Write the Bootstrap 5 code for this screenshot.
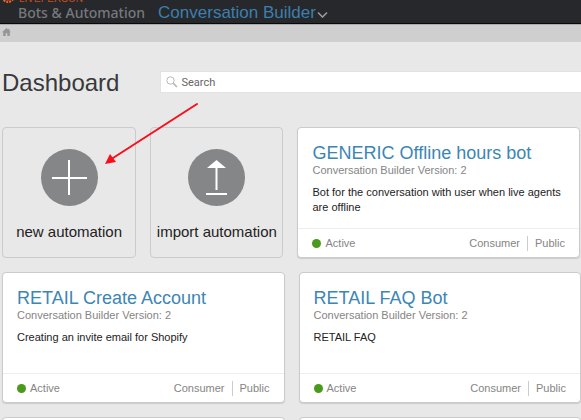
<!DOCTYPE html>
<html lang="en">
<head>
<meta charset="utf-8">
<meta name="viewport" content="width=device-width, initial-scale=1">
<title>Conversation Builder - Dashboard</title>
<link href="https://cdn.jsdelivr.net/npm/bootstrap@5.3.0/dist/css/bootstrap.min.css" rel="stylesheet">
<style>
body{font-family:"Liberation Sans",Arial,sans-serif;background:#e8e8e8;color:#222;overflow-x:hidden;font-size:11px;line-height:15px}
a{text-decoration:none}
.topbar{background:#26282c;border-bottom:1px solid #08080a;height:24px;overflow:hidden}
.logo-line{height:3px;padding-left:1px;gap:4px}
.logo-line svg{flex:none}
.logo-word{color:#c2501f;font-size:10px;line-height:8px}
.product{height:20px;gap:13px;padding-left:18px}
.suite{font:500 14px/20px "Noto Sans","Open Sans",sans-serif;color:#77797b}
.app-menu{color:#3d7fad;font-size:17px;line-height:20px;gap:1px}
.crumbs{background:#cfcfcf;border-top:1px solid #aaa;height:18px;padding-left:2px}
.crumbs a{margin-bottom:3px}
.heading-row{padding:29px 0 32px 2px;gap:41px}
.heading-row h1{font-size:24px;line-height:24px;color:#37393b}
.search-box{background:#fff;height:22px;margin-bottom:2px;padding-left:5px;gap:3px;border:1px solid #e2e2e2;border-right:0}
.search-box input{font:11px/15px Roboto,sans-serif;color:#555}
.search-box input::placeholder{color:#666;opacity:1}
.board{display:grid;gap:14px;padding-left:2px}
.board-top{grid-template-columns:134fr 133fr 282fr;margin-bottom:14px;padding-right:1px}
.board-bots{grid-template-columns:1fr 1fr}
.tile,.bot{min-height:131px;border:1px solid #cbcbcb;border-radius:4px}
.tile{background:none;color:#222;font-size:15px;line-height:20px;padding:21px 0 14px;gap:16px;white-space:nowrap}
.bot{background:#fff;box-shadow:0 1px 1px #ccc}
.bot-main{padding:15px 14px 0}
.bot h2{font-size:18px;line-height:20px;color:#3c86b4}
.muted{color:#858585}
.bot-text{margin-top:7px}
.bot-foot{border-top:1px solid #eee;height:29px;padding:0 14px;color:#858585}
.dot{width:9px;height:9px;background:#4a9a1c}
.audience{border-right:1px solid #ccc;padding-right:7px;margin-right:7px}
.pointer{left:100px;top:58px;pointer-events:none}
</style>
</head>
<body>
<header class="topbar">
  <div class="logo-line d-flex align-items-end">
    <svg width="14" height="14" viewBox="0 0 14 14"><circle cx="7" cy="7" r="5" fill="#e8622c"/><circle cx="7" cy="7" r="6" fill="none" stroke="#e8622c" stroke-width="2" stroke-dasharray="2 1"/><path d="M5 11H9" stroke="#26282c"/></svg>
    <span class="logo-word">LIVEPERSON</span>
  </div>
  <div class="product d-flex align-items-center">
    <span class="suite">Bots &amp; Automation</span>
    <button class="app-menu btn p-0 border-0 d-flex align-items-center" type="button">Conversation Builder
      <svg width="11" height="10" viewBox="0 0 11 10" fill="none" stroke="#9b9b9b" stroke-width="1.6"><path d="M1 4.500 5.500 9 10 4.500"/></svg>
    </button>
  </div>
</header>
<nav class="crumbs d-flex align-items-center" aria-label="Breadcrumb">
  <a href="#" class="d-flex" aria-label="Home"><svg width="9" height="8" viewBox="0 0 9 8" fill="#969696"><path d="M4.5 0 0 4.2H1.2V8H3.7V5.2H5.3V8H7.8V4.2H9L7.5 2.8V.7H6.3V1.7Z"/></svg></a>
</nav>
<main class="position-relative">
  <div class="heading-row d-flex align-items-center">
    <h1 class="fw-normal m-0">Dashboard</h1>
    <label class="search-box d-flex align-items-center flex-grow-1">
      <svg width="12" height="12" viewBox="0 0 12 12" fill="none" stroke="#b9b9b9"><circle cx="4.5" cy="4.5" r="3.7"/><path d="M7.3 7.3 11 11" stroke-width="1.7"/></svg>
      <input class="border-0 p-0 bg-transparent flex-grow-1" type="search" placeholder="Search" aria-label="Search">
    </label>
  </div>
  <section class="board board-top">
    <button class="tile d-flex flex-column align-items-center" type="button">
      <svg width="57" height="57" viewBox="0 0 57 57"><circle cx="28.5" cy="28.5" r="28.5" fill="#858687"/><path d="M28 11V46M11 29H46" stroke="#fff" stroke-width="2"/></svg>
      new automation
    </button>
    <button class="tile d-flex flex-column align-items-center" type="button">
      <svg width="57" height="57" viewBox="0 0 57 57"><circle cx="28.5" cy="28.5" r="28.5" fill="#858687"/><path d="M28.5 17V41M18 45H39" stroke="#fff" stroke-width="2"/><path d="M28.5 11 38 19H19Z" fill="#fff"/></svg>
      import automation
    </button>
    <article class="bot d-flex flex-column">
      <div class="bot-main flex-grow-1">
        <h2 class="fw-normal m-0">GENERIC Offline hours bot</h2>
        <div class="muted">Conversation Builder Version: 2</div>
        <p class="bot-text mb-0">Bot for the conversation with user when live agents are offline</p>
      </div>
      <div class="bot-foot d-flex align-items-center">
        <span class="dot rounded-circle me-1"></span>Active
        <span class="audience ms-auto">Consumer</span><span>Public</span>
      </div>
    </article>
  </section>
  <section class="board board-bots">
    <article class="bot d-flex flex-column">
      <div class="bot-main flex-grow-1">
        <h2 class="fw-normal m-0">RETAIL Create Account</h2>
        <div class="muted">Conversation Builder Version: 2</div>
        <p class="bot-text mb-0">Creating an invite email for Shopify</p>
      </div>
      <div class="bot-foot d-flex align-items-center">
        <span class="dot rounded-circle me-1"></span>Active
        <span class="audience ms-auto">Consumer</span><span>Public</span>
      </div>
    </article>
    <article class="bot d-flex flex-column">
      <div class="bot-main flex-grow-1">
        <h2 class="fw-normal m-0">RETAIL FAQ Bot</h2>
        <div class="muted">Conversation Builder Version: 2</div>
        <p class="bot-text mb-0">RETAIL FAQ</p>
      </div>
      <div class="bot-foot d-flex align-items-center">
        <span class="dot rounded-circle me-1"></span>Active
        <span class="audience ms-auto">Consumer</span><span>Public</span>
      </div>
    </article>
    <article class="bot"></article>
    <article class="bot"></article>
  </section>
  <svg class="pointer position-absolute" width="104" height="68" viewBox="0 0 104 68"><path d="M97 4 13 58" stroke="#fb0d1b" stroke-width="2" stroke-linecap="round"/><path d="M5 64 10 54 16 62Z" fill="#fb0d1b"/></svg>
</main>
<script src="https://cdn.jsdelivr.net/npm/bootstrap@5.3.0/dist/js/bootstrap.bundle.min.js"></script>
</body>
</html>
